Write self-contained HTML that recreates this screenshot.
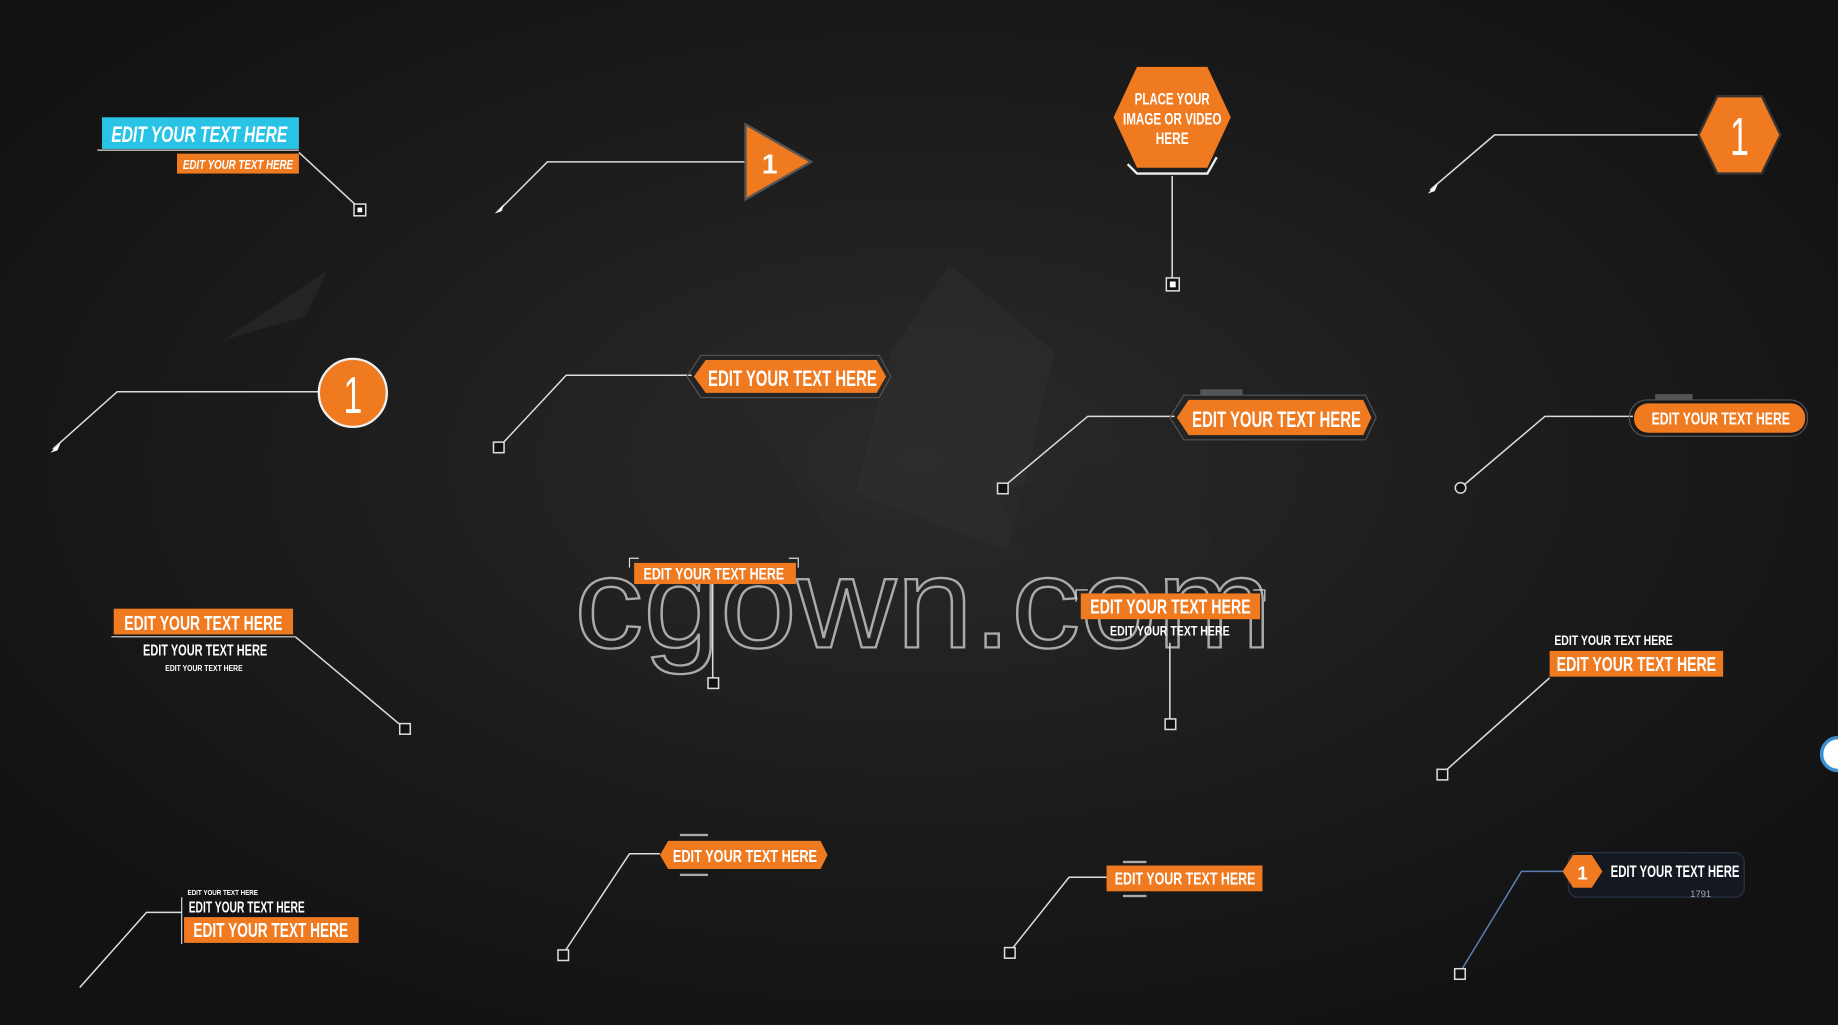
<!DOCTYPE html>
<html><head><meta charset="utf-8"><style>
html,body{margin:0;padding:0;background:#151515;overflow:hidden}
svg{display:block}
text{font-family:"Liberation Sans",sans-serif;font-weight:bold}
</style></head><body>
<svg width="1838" height="1025" viewBox="0 0 1568 874" preserveAspectRatio="none" xmlns="http://www.w3.org/2000/svg">
<defs>
<radialGradient id="bg" cx="0.5" cy="0.45" r="0.6">
<stop offset="0" stop-color="#2a2a2a"/><stop offset="0.6" stop-color="#1b1b1b"/><stop offset="1" stop-color="#121212"/>
</radialGradient>
</defs>
<rect width="1568" height="874" fill="url(#bg)"/>
<polygon points="760,300 810,225 900,300 860,470 730,420" fill="#333" opacity="0.35"/>
<polygon points="460,380 620,330 720,470 560,520" fill="#242424" opacity="0.5"/>
<polygon points="850,420 1000,380 1050,500 900,520" fill="#262626" opacity="0.4"/>
<polygon points="190,290 280,230 260,270" fill="#242424"/>

<!-- watermark -->
<text x="490" y="552" font-size="110" fill="none" stroke="#aaa" stroke-width="2" style="font-weight:normal" textLength="595" lengthAdjust="spacingAndGlyphs">cgown.com</text>

<g stroke="#ddd" stroke-width="1.3" fill="none">
<polyline points="255,130 307,178"/>
<polyline points="425,180 467,138 640,138"/>
<line x1="1000" y1="150" x2="1000" y2="238"/>
<polyline points="1220,162 1275,115 1450,115"/>
<polyline points="45,383 100,334 273,334"/>
<polyline points="426,381 483,320 590,320"/>
<polyline points="855,416 928,355 1002,355"/>
<polyline points="1246,416 1318,355 1393,355"/>
<polyline points="252,543 345,621"/>
<line x1="608" y1="498" x2="608" y2="580"/>
<line x1="998" y1="548" x2="998" y2="615"/>
<polyline points="1322,578 1230,660"/>
<polyline points="68,842 125,778 155,778"/>
<polyline points="480,814 537,728 563,728"/>
<polyline points="861,812 912,748 944,748"/>
<polyline points="1245,830 1298,743 1334,743" stroke="#5a7fb0"/>
</g>
<g fill="#111" stroke="#ddd" stroke-width="1.3">
<rect x="302" y="174" width="10" height="10"/><rect x="995" y="237" width="11" height="11"/>
<rect x="421" y="377" width="9" height="9"/><rect x="851" y="412" width="9" height="9"/>
<circle cx="1246" cy="416" r="4.5"/><rect x="341" y="617" width="9" height="9"/>
<rect x="604" y="578" width="9" height="9"/><rect x="994" y="613" width="9" height="9"/>
<rect x="1226" y="656" width="9" height="9"/><rect x="476" y="810" width="9" height="9"/>
<rect x="857" y="808" width="9" height="9"/><rect x="1241" y="826" width="9" height="9"/>
</g>
<g fill="#fff"><rect x="305" y="177" width="4" height="4"/><rect x="998" y="240" width="5" height="5"/>
<polygon points="422,182 430,174 428,180"/><polygon points="1218,165 1227,156 1224,163"/><polygon points="43,386 52,377 49,384"/></g>

<!-- 1 cyan -->
<rect x="87" y="100" width="168" height="27" fill="#29c3e6"/>
<line x1="83" y1="128" x2="255" y2="128" stroke="#ddd"/>
<text x="95" y="121" font-size="19" fill="#fff" font-style="italic" textLength="150" lengthAdjust="spacingAndGlyphs">EDIT YOUR TEXT HERE</text>
<rect x="151" y="131" width="104" height="17" fill="#ef7a20"/>
<text x="156" y="144" font-size="11" fill="#fff" font-style="italic" textLength="94" lengthAdjust="spacingAndGlyphs">EDIT YOUR TEXT HERE</text>

<!-- 2 triangle -->
<polygon points="636,106 692,138 636,170" fill="#ef7a20" stroke="#555" stroke-width="2"/>
<text x="650" y="148" font-size="24" fill="#fff">1</text>

<!-- 3 hex -->
<polygon points="970,57 1030,57 1050,100 1030,143 970,143 950,100" fill="#ef7a20"/>
<polyline points="962,140 970,148 1030,148 1038,134" fill="none" stroke="#eee" stroke-width="2"/>
<g font-size="14" fill="#fff" text-anchor="middle"><text x="1000" y="89" textLength="64" lengthAdjust="spacingAndGlyphs">PLACE YOUR</text><text x="1000" y="106" textLength="84" lengthAdjust="spacingAndGlyphs">IMAGE OR VIDEO</text><text x="1000" y="123" textLength="28" lengthAdjust="spacingAndGlyphs">HERE</text></g>

<!-- 4 hex 1 -->
<polygon points="1465,82 1503,82 1519,115 1503,148 1465,148 1449,115" fill="#ef7a20" stroke="#333" stroke-width="2"/>
<text x="1484" y="132" font-size="46" fill="#fff" text-anchor="middle" style="font-weight:normal" textLength="16" lengthAdjust="spacingAndGlyphs">1</text>

<!-- 5 circle -->
<circle cx="301" cy="335" r="29" fill="#ef7a20" stroke="#eee" stroke-width="2"/>
<text x="301" y="352" font-size="44" fill="#fff" text-anchor="middle" style="font-weight:normal" textLength="16" lengthAdjust="spacingAndGlyphs">1</text>

<!-- 6 -->
<polygon points="586,321 598,303 750,303 760,321 750,339 598,339" fill="none" stroke="#555"/>
<polygon points="592,321 602,307 748,307 756,321 748,335 602,335" fill="#ef7a20"/>
<text x="604" y="329" font-size="19" fill="#fff" textLength="144" lengthAdjust="spacingAndGlyphs">EDIT YOUR TEXT HERE</text>

<!-- 7 -->
<polygon points="998,356 1010,337 1165,337 1174,356 1165,375 1010,375" fill="none" stroke="#555"/>
<polygon points="1004,356 1014,341 1163,341 1170,356 1163,371 1014,371" fill="#ef7a20"/>
<rect x="1024" y="332" width="36" height="5" fill="#555"/>
<text x="1017" y="364" font-size="19" fill="#fff" textLength="144" lengthAdjust="spacingAndGlyphs">EDIT YOUR TEXT HERE</text>

<!-- 8 -->
<rect x="1390" y="341" width="152" height="31" rx="15" fill="none" stroke="#555"/>
<rect x="1394" y="344" width="146" height="25" rx="12" fill="#ef7a20"/>
<rect x="1412" y="336" width="32" height="5" fill="#555"/>
<text x="1409" y="362" font-size="15" fill="#fff" textLength="118" lengthAdjust="spacingAndGlyphs">EDIT YOUR TEXT HERE</text>

<!-- 9 -->
<rect x="97" y="519" width="153" height="22" fill="#ef7a20"/>
<line x1="95" y1="543" x2="252" y2="543" stroke="#ddd"/>
<text x="106" y="537" font-size="17" fill="#fff" textLength="135" lengthAdjust="spacingAndGlyphs">EDIT YOUR TEXT HERE</text>
<text x="122" y="559" font-size="13" fill="#fff" textLength="106" lengthAdjust="spacingAndGlyphs">EDIT YOUR TEXT HERE</text>
<text x="141" y="572" font-size="7" fill="#fff" textLength="66" lengthAdjust="spacingAndGlyphs">EDIT YOUR TEXT HERE</text>

<!-- 10 -->
<rect x="541" y="480" width="138" height="18" fill="#ef7a20"/>
<path d="M537,484V476H545M673,476H681V484" fill="none" stroke="#ddd"/>
<text x="549" y="494" font-size="14" fill="#fff" textLength="120" lengthAdjust="spacingAndGlyphs">EDIT YOUR TEXT HERE</text>

<!-- 11 -->
<rect x="922" y="506" width="153" height="22" fill="#ef7a20"/>
<path d="M918,513V503H928M1069,503H1079V513" fill="none" stroke="#ddd"/>
<text x="930" y="523" font-size="17" fill="#fff" textLength="137" lengthAdjust="spacingAndGlyphs">EDIT YOUR TEXT HERE</text>
<text x="947" y="542" font-size="12" fill="#fff" textLength="102" lengthAdjust="spacingAndGlyphs">EDIT YOUR TEXT HERE</text>

<!-- 12 -->
<text x="1326" y="550" font-size="12" fill="#fff" textLength="101" lengthAdjust="spacingAndGlyphs">EDIT YOUR TEXT HERE</text>
<rect x="1322" y="555" width="148" height="22" fill="#ef7a20"/>
<text x="1328" y="572" font-size="17" fill="#fff" textLength="136" lengthAdjust="spacingAndGlyphs">EDIT YOUR TEXT HERE</text>

<!-- 13 -->
<text x="160" y="763" font-size="6" fill="#fff" textLength="60" lengthAdjust="spacingAndGlyphs">EDIT YOUR TEXT HERE</text>
<text x="161" y="778" font-size="13" fill="#fff" textLength="99" lengthAdjust="spacingAndGlyphs">EDIT YOUR TEXT HERE</text>
<rect x="157" y="782" width="149" height="22" fill="#ef7a20"/>
<line x1="155" y1="765" x2="155" y2="805" stroke="#ddd"/>
<text x="165" y="799" font-size="17" fill="#fff" textLength="132" lengthAdjust="spacingAndGlyphs">EDIT YOUR TEXT HERE</text>

<!-- 14 -->
<polygon points="563,729 570,717 700,717 706,729 700,741 570,741" fill="#ef7a20"/>
<rect x="580" y="711" width="24" height="2" fill="#aaa"/><rect x="580" y="745" width="24" height="2" fill="#aaa"/>
<text x="574" y="735" font-size="15" fill="#fff" textLength="123" lengthAdjust="spacingAndGlyphs">EDIT YOUR TEXT HERE</text>

<!-- 15 -->
<rect x="944" y="738" width="133" height="22" fill="#ef7a20"/>
<rect x="958" y="734" width="20" height="2" fill="#aaa"/><rect x="958" y="763" width="20" height="2" fill="#aaa"/>
<text x="951" y="754" font-size="15" fill="#fff" textLength="120" lengthAdjust="spacingAndGlyphs">EDIT YOUR TEXT HERE</text>

<!-- 16 -->
<rect x="1338" y="727" width="150" height="38" rx="8" fill="#141820" stroke="#2a3448"/>
<polygon points="1342,729 1358,729 1367,743 1358,757 1342,757 1333,743" fill="#ef7a20"/>
<text x="1350" y="750" font-size="16" fill="#fff" text-anchor="middle">1</text>
<text x="1374" y="748" font-size="14" fill="#fff" textLength="110" lengthAdjust="spacingAndGlyphs">EDIT YOUR TEXT HERE</text>
<text x="1442" y="765" font-size="8" fill="#aaa" style="font-weight:normal">1791</text>

<circle cx="1568" cy="643" r="14" fill="#fff" stroke="#3a8fd0" stroke-width="3"/>
</svg>
</body></html>
